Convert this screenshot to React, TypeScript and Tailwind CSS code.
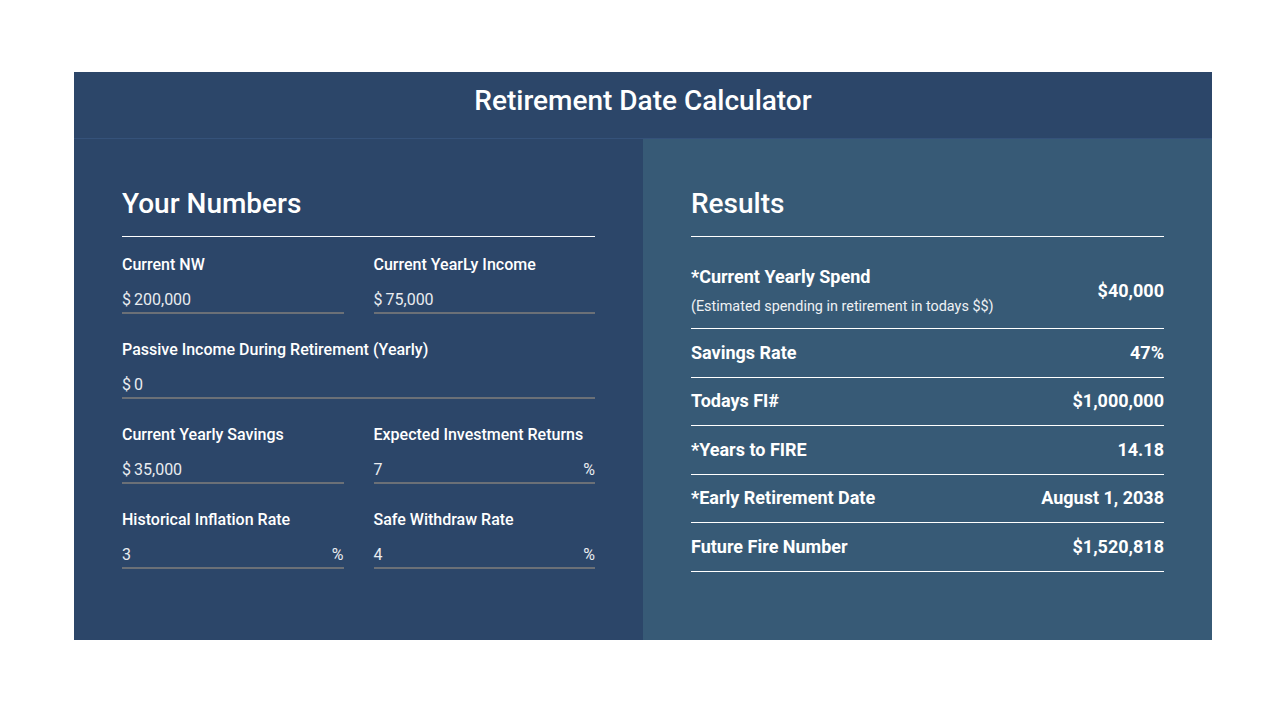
import React from 'react'

const font = { fontFamily: 'Roboto, "Liberation Sans", sans-serif' }

type Field = { label: string; prefix?: string; value: string; suffix?: string; full?: boolean }

const fields: Field[] = [
  { label: 'Current NW', prefix: '$', value: '200,000' },
  { label: 'Current YearLy Income', prefix: '$', value: '75,000' },
  { label: 'Passive Income During Retirement (Yearly)', prefix: '$', value: '0', full: true },
  { label: 'Current Yearly Savings', prefix: '$', value: '35,000' },
  { label: 'Expected Investment Returns', value: '7', suffix: '%' },
  { label: 'Historical Inflation Rate', value: '3', suffix: '%' },
  { label: 'Safe Withdraw Rate', value: '4', suffix: '%' },
]

const results = [
  { label: 'Savings Rate', value: '47%' },
  { label: 'Todays FI#', value: '$1,000,000' },
  { label: '*Years to FIRE', value: '14.18' },
  { label: '*Early Retirement Date', value: 'August 1, 2038' },
  { label: 'Future Fire Number', value: '$1,520,818' },
]

const InputField = ({ f }: { f: Field }) => (
  <div className={f.full ? 'col-span-2' : ''}>
    <label className="block text-[16px] leading-[20px] font-medium text-white">{f.label}</label>
    <div className="mt-[15px] flex items-center justify-between border-b-2 border-[#6b7077] pb-[2px] text-[16px] leading-[20px] text-[#e9ecf0]">
      <span>
        {f.prefix && <span className="mr-[3px]">{f.prefix}</span>}
        {f.value}
      </span>
      {f.suffix && <span>{f.suffix}</span>}
    </div>
  </div>
)

export default function App() {
  return (
    <div className="min-h-screen bg-white pt-[72px]" style={font}>
      <div className="ml-[74px] w-[1138px]">
        <div className="flex h-[67px] items-center justify-center border-b border-[#35527a] bg-[#2c4669] pb-[9px]">
          <h1 className="text-[28px] leading-[32px] font-medium text-white">Retirement Date Calculator</h1>
        </div>
        <div className="grid h-[501px] grid-cols-2">
          {/* inputs */}
          <div className="bg-[#2c4669] px-12 pt-[49px]">
            <h2 className="border-b border-white pb-[16px] text-[28px] leading-[32px] font-medium text-white">Your Numbers</h2>
            <div className="mt-[18px] grid grid-cols-2 gap-x-[30px] gap-y-[26px]">
              {fields.map((f) => (
                <InputField key={f.label} f={f} />
              ))}
            </div>
          </div>

          {/* results */}
          <div className="bg-[#375a76] px-12 pt-[49px]">
            <h2 className="border-b border-white pb-[16px] text-[28px] leading-[32px] font-medium text-white">Results</h2>
            <div className="flex items-center justify-between border-b border-white pt-[29px] pb-[12px]">
              <div>
                <div className="text-[18px] leading-[22px] font-bold text-white">*Current Yearly Spend</div>
                <div className="mt-[10px] text-[14.4px] leading-[18px] text-[#eef1f4]">
                  (Estimated spending in retirement in todays $$)
                </div>
              </div>
              <div className="text-[18px] leading-[22px] font-bold text-white">$40,000</div>
            </div>
            {results.map((r) => (
              <div key={r.label} className="flex items-center justify-between border-b border-white pt-[13.5px] pb-[14px] text-[18px] leading-[20px] font-bold text-white">
                <span>{r.label}</span>
                <span>{r.value}</span>
              </div>
            ))}
          </div>
        </div>
      </div>
    </div>
  )
}
